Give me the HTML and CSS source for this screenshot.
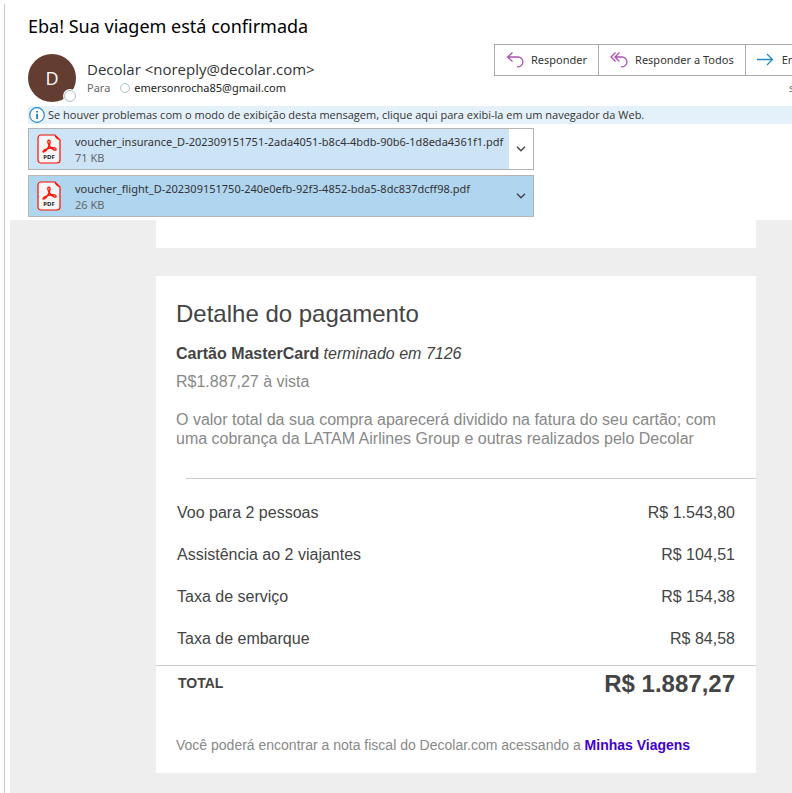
FILE: index.html
```html
<!DOCTYPE html>
<html lang="pt-BR">
<head>
<meta charset="utf-8">
<title>Eba! Sua viagem está confirmada</title>
<link rel="stylesheet" href="styles.css">
</head>
<body>
<svg class="sprite" aria-hidden="true">
  <symbol id="pdf" viewBox="0 0 24 30">
    <path d="M4 1h14l5 5v20a3 3 0 0 1-3 3H4a3 3 0 0 1-3-3V4a3 3 0 0 1 3-3z" fill="#f5f5f5" stroke="#fa0f00" stroke-width="1.200"/>
    <path d="M18 1v1.500c1 2 2 3 5 3.500z" fill="#fa0f00"/>
    <path d="M12 6.200c-1.800 0-1.400 2.800.2 5 1.400 2.200 3.300 4.600 5.600 5 1.900.2 1.800-1.900-.2-2.300-3.300-.5-7 .4-9.900 1.900-2.600 1.500-1.900 3 -.3 2 2.200-1.500 4.300-4.700 5.200-7.600.7-2.200.7-4-.6-4z" fill="none" stroke="#fa0f00" stroke-width="1.300"/>
  </symbol>
  <symbol id="chevron" viewBox="0 0 10 6"><path d="M1 .8l4 4 4-4" fill="none" stroke="#444" stroke-width="1.400"/></symbol>
</svg>
<main class="pane">
  <header class="head">
    <h1 class="subject">Eba! Sua viagem está confirmada</h1>
    <div class="meta">
      <div class="avatar">D<span class="presence"></span></div>
      <div class="people">
        <div class="from">Decolar &lt;noreply@decolar.com&gt;</div>
        <div class="to"><span class="to-label">Para</span><span class="dot"></span><span>emersonrocha85@gmail.com</span></div>
      </div>
      <div class="side">
        <div class="actions">
          <button type="button"><svg width="18" height="18" viewBox="0 0 18 18" class="purple"><path d="M6.500 1.500L1.500 6l5 4.500M1.500 6H12a4.800 4.800 0 0 1 0 9.800h-1"/></svg>Responder</button>
          <button type="button"><svg width="18" height="18" viewBox="0 0 18 18" class="purple"><path d="M5.500 1.500L1 6l4.500 4.500M9.500 1.500L5 6l4.500 4.500M5 6h7a4.800 4.800 0 0 1 0 9.800h-1"/></svg>Responder a Todos</button>
          <button type="button"><svg width="18" height="18" viewBox="0 0 18 18" class="blue"><path d="M0 8.500h15M10 3l5.500 5.500L10 14"/></svg>Encaminhar</button>
        </div>
        <div class="date">sex</div>
      </div>
    </div>
  </header>
  <div class="notice">
    <svg width="16" height="16" viewBox="0 0 16 16"><circle cx="8" cy="8" r="7.300" fill="#fff" stroke="#2589cc" stroke-width="1.200"/><path d="M7.200 4h1.700v1.500H7.200zM7.200 6.700h1.700V12H7.200z" fill="#1979bd"/></svg>
    <span>Se houver problemas com o modo de exibição desta mensagem, clique aqui para exibi-la em um navegador da Web.</span>
  </div>
  <div class="files">
    <div class="file">
      <svg class="pdf" width="24" height="30"><use href="#pdf"/><text x="12" y="25" text-anchor="middle" class="pdf-label">PDF</text></svg>
      <div class="file-info"><div class="file-name">voucher_insurance_D-202309151751-2ada4051-b8c4-4bdb-90b6-1d8eda4361f1.pdf</div><div class="size">71 KB</div></div>
      <button type="button" class="more" aria-label="Opções"><svg width="10" height="6"><use href="#chevron"/></svg></button>
    </div>
    <div class="file selected">
      <svg class="pdf" width="24" height="30"><use href="#pdf"/><text x="12" y="25" text-anchor="middle" class="pdf-label">PDF</text></svg>
      <div class="file-info"><div class="file-name">voucher_flight_D-202309151750-240e0efb-92f3-4852-bda5-8dc837dcff98.pdf</div><div class="size">26 KB</div></div>
      <button type="button" class="more" aria-label="Opções"><svg width="10" height="6"><use href="#chevron"/></svg></button>
    </div>
  </div>
  <div class="mail">
    <div class="previous"></div>
    <section class="card">
      <div class="intro">
        <h2>Detalhe do pagamento</h2>
        <p class="method"><strong>Cartão MasterCard</strong> <em>terminado em 7126</em></p>
        <p class="cash">R$1.887,27 à vista</p>
        <p class="note">O valor total da sua compra aparecerá dividido na fatura do seu cartão; com uma cobrança da LATAM Airlines Group e outras realizados pelo Decolar</p>
      </div>
      <hr>
      <table>
        <tbody>
          <tr><td>Voo para 2 pessoas</td><td>R$ 1.543,80</td></tr>
          <tr><td>Assistência ao 2 viajantes</td><td>R$ 104,51</td></tr>
          <tr><td>Taxa de serviço</td><td>R$ 154,38</td></tr>
          <tr><td>Taxa de embarque</td><td>R$ 84,58</td></tr>
        </tbody>
        <tfoot>
          <tr><th scope="row">TOTAL</th><td>R$ 1.887,27</td></tr>
        </tfoot>
      </table>
      <p class="invoice">Você poderá encontrar a nota fiscal do Decolar.com acessando a <a href="#viagens">Minhas Viagens</a></p>
    </section>
  </div>
</main>
</body>
</html>
```
FILE: styles.css
```css
* { box-sizing: border-box; }
body { margin: 0; background: #fff; font: 11px/16px "Noto Sans", "Open Sans", sans-serif; color: #333; }
h1, h2, p { margin: 0; font-weight: 400; }
button { font: inherit; color: inherit; }
.sprite { position: absolute; width: 0; height: 0; }
.pdf-label { font: 700 6px "Open Sans", sans-serif; fill: #222; }
.pane { margin: 4px 0 0 4px; border-left: 1px solid #c8c8c8; min-height: calc(100vh - 4px); display: flex; flex-direction: column; overflow: hidden; }
.head { padding-left: 23px; }
.subject { font-size: 18px; line-height: 24px; padding-top: 10px; color: #000; white-space: nowrap; }
.meta { display: flex; height: 68px; }
.avatar { position: relative; flex: none; width: 48px; height: 48px; margin-top: 16px; border-radius: 50%; background: #633c32; color: #fff; font-family: "Open Sans", sans-serif; font-size: 18px; line-height: 48px; text-align: center; }
.presence { position: absolute; right: 0; bottom: 0; width: 12px; height: 12px; border: 1px solid #a9c3cf; border-radius: 50%; background: #fff; box-shadow: 0 0 0 1px #fff; }
.people { flex: none; width: 407px; padding: 21px 0 0 11px; white-space: nowrap; }
.from { font-family: "Open Sans", sans-serif; font-size: 15px; line-height: 20px; }
.to { display: flex; align-items: center; line-height: 18px; color: #222; }
.to-label { color: #666; }
.dot { width: 10px; height: 10px; margin: 0 4px 0 10px; border: 1px solid #a9c3cf; border-radius: 50%; }
.side { flex: none; padding: 6px 0 0 11px; }
.actions { display: flex; border: 1px solid #ababab; height: 32px; }
.actions button { display: flex; align-items: center; gap: 7px; padding: 0 11px; border: 0; border-right: 1px solid #ababab; background: #fff; white-space: nowrap; }
.actions svg { fill: none; stroke-width: 1.3; }
.purple { stroke: #ad4fb4; }
.blue { stroke: #2589cc; }
.date { padding: 4px 0 0 295px; color: #666; }
.notice { display: flex; align-items: center; gap: 3px; height: 18px; margin-left: 23px; background: #e5f1fa; white-space: nowrap; font-family: "Open Sans", sans-serif; }
.notice svg { margin-left: 1px; flex: none; }
.files { display: grid; gap: 5px; width: 506px; margin: 4px 0 3px 23px; }
.file { display: flex; height: 42px; border: 1px solid #b4b4b4; background: #cde4f7; white-space: nowrap; }
.file.selected { background: #b0d5ef; }
.pdf { flex: none; margin: 5px 14px 0 8px; }
.file-info { flex: 1; min-width: 0; padding-top: 5px; }
.size { color: #666; }
.more { display: flex; align-items: center; justify-content: center; flex: none; width: 24px; padding: 0; border: 0; background: #fff; }
.selected .more { background: transparent; }
.mail { flex: 1; margin-left: 5px; padding: 0 36px 20px 146px; background: #eee; font-family: "Liberation Sans", Arial, sans-serif; color: #444; }
.previous { height: 28px; margin-bottom: 28px; background: #fff; }
.card { background: #fff; font-size: 16px; line-height: 19px; }
.intro { padding: 23px 20px 30px; }
h2 { font-size: 24px; line-height: 29px; }
.method { margin-top: 16px; }
.cash { margin-top: 9px; color: #888; }
.note { margin-top: 19px; color: #888; }
hr { margin: 0 0 0 30px; border: 0; border-top: 1px solid #ccc; }
table { width: 100%; margin-top: 12px; border-collapse: collapse; }
td, th { padding: 0 21px; height: 42px; text-align: left; }
td:last-child { text-align: right; }
tfoot tr { border-top: 1px solid #ccc; }
tfoot th { font-size: 14px; padding-left: 22px; height: 36px; }
tfoot td { font-size: 24px; font-weight: 700; height: 36px; }
tbody::after { content: ""; display: block; height: 6px; }
.invoice { padding: 34px 20px 18px; font-size: 14px; color: #888; }
.invoice a { color: #40c; font-weight: 700; text-decoration: none; }
```
